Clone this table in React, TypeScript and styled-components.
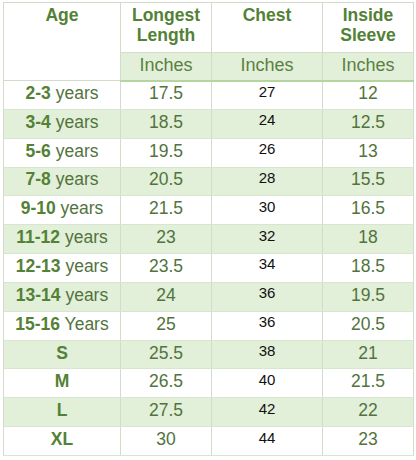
import React from 'react';
import styled, { createGlobalStyle } from 'styled-components';

const GlobalStyle = createGlobalStyle`
  body {
    margin: 0;
    background: #ffffff;
    font-family: "Liberation Sans", Arial, sans-serif;
  }
`;

const rows = [
  { num: '2-3', unit: 'years', length: '17.5', chest: '27', sleeve: '12' },
  { num: '3-4', unit: 'years', length: '18.5', chest: '24', sleeve: '12.5' },
  { num: '5-6', unit: 'years', length: '19.5', chest: '26', sleeve: '13' },
  { num: '7-8', unit: 'years', length: '20.5', chest: '28', sleeve: '15.5' },
  { num: '9-10', unit: 'years', length: '21.5', chest: '30', sleeve: '16.5' },
  { num: '11-12', unit: 'years', length: '23', chest: '32', sleeve: '18' },
  { num: '12-13', unit: 'years', length: '23.5', chest: '34', sleeve: '18.5' },
  { num: '13-14', unit: 'years', length: '24', chest: '36', sleeve: '19.5' },
  { num: '15-16', unit: 'Years', length: '25', chest: '36', sleeve: '20.5' },
  { num: 'S', unit: '', length: '25.5', chest: '38', sleeve: '21' },
  { num: 'M', unit: '', length: '26.5', chest: '40', sleeve: '21.5' },
  { num: 'L', unit: '', length: '27.5', chest: '42', sleeve: '22' },
  { num: 'XL', unit: '', length: '30', chest: '44', sleeve: '23' },
];

const Page = styled.div`
  padding: 2px 3px;
`;

const Table = styled.table`
  width: 410px;
  table-layout: fixed;
  border-collapse: collapse;
  border: 1px solid #d3dccb;
`;

const HeadRow = styled.tr`
  height: 50px;
`;

const UnitRow = styled.tr`
  height: 28px;
`;

const HeadCell = styled.th`
  padding: 2px 2px 0;
  vertical-align: top;
  text-align: center;
  font-size: 17.5px;
  line-height: 20px;
  font-weight: bold;
  color: #538135;
  background: #ffffff;
  border: 1px solid #d3dccb;
`;

const UnitCell = styled.th`
  padding: 0 2px 1px;
  text-align: center;
  font-size: 18px;
  font-weight: normal;
  color: #5b7f43;
  background: #e2efd9;
  border: 1px solid #d3dccb;
  border-bottom: 2px solid #b5d49e;
`;

const Row = styled.tr<{ $shaded: boolean }>`
  height: 28.85px;
  background: ${(p) => (p.$shaded ? '#e2efd9' : '#ffffff')};
`;

// chest values sit smaller, black and a little higher in the reference
const Cell = styled.td<{ $plain?: boolean }>`
  padding: 0 2px ${(p) => (p.$plain ? '8px' : '4px')};
  text-align: center;
  font-size: ${(p) => (p.$plain ? '15px' : '17.5px')};
  line-height: ${(p) => (p.$plain ? '17px' : '20px')};
  color: ${(p) => (p.$plain ? '#111111' : '#52733d')};
  border-left: 1px solid #d3dccb;
  border-right: 1px solid #d3dccb;
  border-bottom: 1px solid #d9e6cf;
`;

const Size = styled.b`
  color: #538135;
`;

export default function App() {
  return (
    <Page>
      <GlobalStyle />
      <Table>
        <colgroup>
          <col style={{ width: 117 }} />
          <col style={{ width: 91 }} />
          <col style={{ width: 111 }} />
          <col style={{ width: 91 }} />
        </colgroup>
        <thead>
          <HeadRow>
            <HeadCell rowSpan={2}>Age</HeadCell>
            <HeadCell>Longest<br />Length</HeadCell>
            <HeadCell>Chest</HeadCell>
            <HeadCell>Inside<br />Sleeve</HeadCell>
          </HeadRow>
          <UnitRow>
            <UnitCell>Inches</UnitCell>
            <UnitCell>Inches</UnitCell>
            <UnitCell>Inches</UnitCell>
          </UnitRow>
        </thead>
        <tbody>
          {rows.map((r, i) => (
            <Row key={r.num} $shaded={i % 2 === 1}>
              <Cell>
                <Size>{r.num}</Size>
                {r.unit && ' ' + r.unit}
              </Cell>
              <Cell>{r.length}</Cell>
              <Cell $plain>{r.chest}</Cell>
              <Cell>{r.sleeve}</Cell>
            </Row>
          ))}
        </tbody>
      </Table>
    </Page>
  );
}
